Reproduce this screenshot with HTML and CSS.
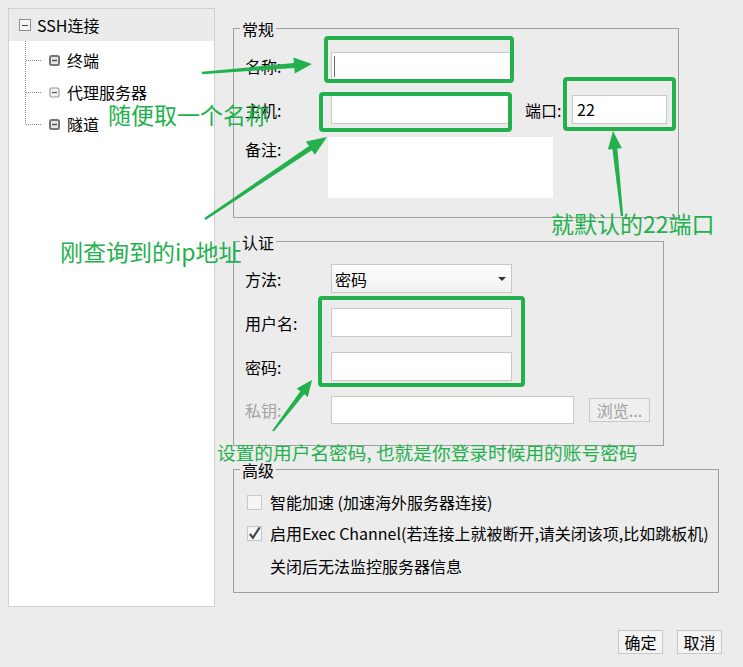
FILE: index.html
```html
<!DOCTYPE html>
<html lang="zh-CN">
<head>
  <meta charset="UTF-8">
  <meta name="viewport" content="width=device-width, initial-scale=1.0">
  <title>SSH连接</title>
  <link rel="stylesheet" href="styles.css">
</head>
<body>
  <div class="window">
    <div class="main">
      <!-- left tree -->
      <div class="tree">
        <div class="tree-root">
          <svg class="root-icon" viewBox="0 0 12 12"><rect x="0.5" y="0.5" width="11" height="11" fill="#f6f6f6" stroke="#8e8e8e"/><path d="M3 6.5H9" stroke="#444" stroke-width="1"/></svg>
          <span>SSH连接</span>
        </div>
        <ul class="tree-children">
          <li class="tree-child">
            <svg class="branch" viewBox="0 0 17 32"><path d="M0.5 -3V32M1 16.5H17" class="dots"/></svg>
            <svg class="node-icon" viewBox="0 0 11 11"><rect x="1" y="1" width="9" height="9" rx="1.5" fill="#e8e8e8" stroke="#777" stroke-width="2"/><path d="M3 5.5H8" stroke="#555" stroke-width="1.5"/></svg>
            <span>终端</span>
          </li>
          <li class="tree-child">
            <svg class="branch" viewBox="0 0 17 32"><path d="M0.5 0V32M1 16.5H17" class="dots"/></svg>
            <svg class="node-icon" viewBox="0 0 11 11"><rect x="1" y="1" width="9" height="9" rx="1.5" fill="#f2f2f2" stroke="#9a9a9a" stroke-width="1.2"/><path d="M3 5.5H8" stroke="#555" stroke-width="1.2"/></svg>
            <span>代理服务器</span>
          </li>
          <li class="tree-child">
            <svg class="branch" viewBox="0 0 17 32"><path d="M0.5 0V16.5M1 16.5H17" class="dots"/></svg>
            <svg class="node-icon" viewBox="0 0 11 11"><rect x="1" y="1" width="9" height="9" rx="1.5" fill="#e8e8e8" stroke="#777" stroke-width="2"/><path d="M3 5.5H8" stroke="#555" stroke-width="1.5"/></svg>
            <span>隧道</span>
          </li>
        </ul>
      </div>

      <div class="panels">
        <!-- 常规 -->
        <div class="group group-general">
          <div class="group-title">常规</div>
          <div class="form-row row-name">
            <span class="field-label">名称:</span>
            <div class="input input-wide"><span class="caret"></span></div>
          </div>
          <div class="form-row row-host">
            <span class="field-label">主机:</span>
            <div class="input input-wide"></div>
            <span class="port-label">端口:</span>
            <div class="input input-port">22</div>
          </div>
          <div class="form-row row-note">
            <span class="field-label">备注:</span>
            <div class="textarea"></div>
          </div>
        </div>

        <!-- 认证 -->
        <div class="group group-auth">
          <div class="group-title">认证</div>
          <div class="form-row row-method">
            <span class="field-label">方法:</span>
            <div class="select"><span>密码</span><span class="select-arrow"></span></div>
          </div>
          <div class="form-row row-auth">
            <span class="field-label">用户名:</span>
            <div class="input input-wide"></div>
          </div>
          <div class="form-row row-auth">
            <span class="field-label">密码:</span>
            <div class="input input-wide"></div>
          </div>
          <div class="form-row row-auth">
            <span class="field-label disabled">私钥:</span>
            <div class="input input-key"></div>
            <div class="browse">浏览...</div>
          </div>
        </div>

        <!-- 高级 -->
        <div class="group group-advanced">
          <div class="group-title">高级</div>
          <div class="check-row row-first">
            <span class="checkbox"></span>
            <span>智能加速 (加速海外服务器连接)</span>
          </div>
          <div class="check-row row-second">
            <svg class="checkbox-svg" viewBox="0 0 16 16"><rect x="0.5" y="0.5" width="15" height="15" fill="#f4f4f4" stroke="#c4c4c4"/><path d="M3 8.5L6.3 12.5L13.5 1.5" fill="none" stroke="#3b4757" stroke-width="2.2"/></svg>
            <span>启用Exec Channel(若连接上就被断开,请关闭该项,比如跳板机)</span>
          </div>
          <div class="check-hint">关闭后无法监控服务器信息</div>
        </div>
      </div>
    </div>

    <div class="footer">
      <button class="btn">确定</button>
      <button class="btn">取消</button>
    </div>

    <!-- annotation layer -->
    <svg class="marks" viewBox="0 0 743 667">
      <g fill="none" stroke="#22b14c" stroke-width="4">
        <rect x="326" y="38" width="186" height="43" rx="2"/>
        <rect x="321" y="94" width="189" height="36" rx="2"/>
        <rect x="565" y="79" width="109" height="50" rx="2"/>
        <rect x="320" y="298" width="203" height="87" rx="2"/>
      </g>
      <g fill="#22b14c">
        <polygon points="202.1,74.2 294.3,67.9 294.7,73.4 312,64 293.4,57.5 293.9,63 201.9,71.8"/>
        <polygon points="205.7,220 311.8,150.2 314.9,154.8 327,137 305.9,141.5 309,146.1 204.3,218"/>
        <polygon points="623.2,215.9 617.4,148.6 621.9,148.2 613,131 607.9,149.6 612.4,149.2 620.8,216.1"/>
        <polygon points="273.8,431.6 304.3,394.2 307.8,397 312,380 296.7,388.5 300.3,391.2 272.2,430.4"/>
      </g>
    </svg>
    <div class="note note-name">随便取一个名称</div>
    <div class="note note-host">刚查询到的ip地址</div>
    <div class="note note-port">就默认的22端口</div>
    <div class="note note-user">设置的用户名密码, 也就是你登录时候用的账号密码</div>
  </div>
</body>
</html>
```
FILE: styles.css
```css
* {
  box-sizing: border-box;
  margin: 0;
  padding: 0;
}
body {
  background: #ececec;
  font-family: "Noto Sans CJK SC", "Noto Sans", sans-serif;
  font-size: 16px;
  color: #000;
}
.window {
  position: relative;
  width: 743px;
  height: 667px;
  padding: 8px;
  display: flex;
  flex-direction: column;
}
.main {
  display: flex;
  gap: 18px;
  height: 599px;
}

/* tree */
.tree {
  width: 207px;
  height: 599px;
  background: #fff;
  border: 1px solid #d0d0d0;
}
.tree-root {
  display: flex;
  align-items: center;
  gap: 6px;
  height: 32px;
  padding-left: 10px;
  background: #ebebeb;
  line-height: 20px;
}
.root-icon {
  width: 12px;
  height: 12px;
  flex: none;
}
.tree-children {
  list-style: none;
  padding: 3px 0 0 16px;
}
.tree-child {
  display: flex;
  align-items: center;
  height: 32px;
  line-height: 20px;
}
.branch {
  width: 17px;
  height: 32px;
  flex: none;
  overflow: visible;
}
.dots {
  fill: none;
  stroke: #8a8a8a;
  stroke-width: 1;
  stroke-dasharray: 1 1;
}
.node-icon {
  width: 11px;
  height: 11px;
  flex: none;
  margin: 0 7px;
}

/* groups */
.panels {
  display: flex;
  flex-direction: column;
}
.group {
  border: 1px solid #a0a0a0;
  padding-left: 11px;
}
.group-general {
  margin-top: 20px;
  width: 446px;
  height: 190px;
}
.group-auth {
  margin-top: 23px;
  width: 431px;
  height: 205px;
}
.group-advanced {
  margin-top: 23px;
  width: 486px;
  height: 124px;
}
.group-title {
  display: table;
  margin: -9px 0 0 -5px;
  padding: 0 2px;
  background: #ececec;
  line-height: 18px;
}

.form-row {
  display: flex;
  align-items: center;
  line-height: 20px;
}
.field-label {
  width: 86px;
  flex: none;
}
.field-label.disabled {
  color: #a3a3a3;
}
.input {
  height: 29px;
  background: #fff;
  border: 1px solid #c8c8c8;
  flex: none;
}
.input-wide {
  width: 181px;
}
.row-name {
  margin-top: 14px;
}
.row-name .input {
  height: 28px;
}
.caret {
  display: block;
  width: 1px;
  height: 21px;
  margin: 3px 0 0 2px;
  background: #666;
}
.row-host {
  margin-top: 15px;
}
.port-label {
  width: 47px;
  margin-left: 13px;
}
.input-port {
  width: 95px;
  padding-left: 4px;
  line-height: 27px;
}
.row-note {
  margin-top: 13px;
  align-items: flex-start;
}
.row-note .field-label {
  width: 83px;
  margin-top: 2px;
}
.textarea {
  width: 225px;
  height: 61px;
  background: #fff;
}

.row-method {
  margin-top: 13px;
}
.select {
  width: 181px;
  height: 29px;
  border: 1px solid #c8c8c8;
  background: linear-gradient(#fdfdfd, #f1f1f1);
  display: flex;
  align-items: center;
  justify-content: space-between;
  padding: 0 5px 0 3px;
}
.select-arrow {
  width: 0;
  height: 0;
  border-left: 4px solid transparent;
  border-right: 4px solid transparent;
  border-top: 4px solid #333;
}
.row-auth {
  margin-top: 15px;
}
.input-key {
  width: 243px;
  height: 28px;
}
.browse {
  width: 61px;
  height: 24px;
  margin-left: 15px;
  border: 1px solid #c8c8c8;
  background: #efefef;
  color: #a0a0a0;
  text-align: center;
  line-height: 22px;
}

.check-row {
  display: flex;
  align-items: center;
  gap: 8px;
  line-height: 20px;
  padding-left: 2px;
}
.row-first {
  margin-top: 13px;
}
.row-second {
  margin-top: 11px;
}
.checkbox {
  width: 15px;
  height: 15px;
  border: 1px solid #c8c8c8;
  background: #f5f5f5;
}
.checkbox-svg {
  width: 15px;
  height: 15px;
  overflow: visible;
}
.check-hint {
  margin-top: 13px;
  padding-left: 25px;
  line-height: 20px;
}

/* footer buttons */
.footer {
  display: flex;
  justify-content: flex-end;
  gap: 14px;
  margin-top: 23px;
  padding-right: 13px;
}
.btn {
  width: 45px;
  height: 24px;
  border: 1px solid #c8c8c8;
  background: #f4f4f4;
  font: inherit;
  font-size: 16px;
  line-height: 22px;
  color: #000;
}

/* annotations drawn over the dialog */
.marks {
  position: absolute;
  left: 0;
  top: 0;
  width: 743px;
  height: 667px;
  pointer-events: none;
}
.note {
  position: absolute;
  color: #22b14c;
  font-size: 23px;
  line-height: 1;
  white-space: nowrap;
}
.note-name {
  left: 108px;
  top: 103px;
}
.note-host {
  left: 60px;
  top: 240px;
}
.note-port {
  left: 551px;
  top: 212px;
}
.note-user {
  left: 217px;
  top: 443px;
  font-size: 18.7px;
}
```
